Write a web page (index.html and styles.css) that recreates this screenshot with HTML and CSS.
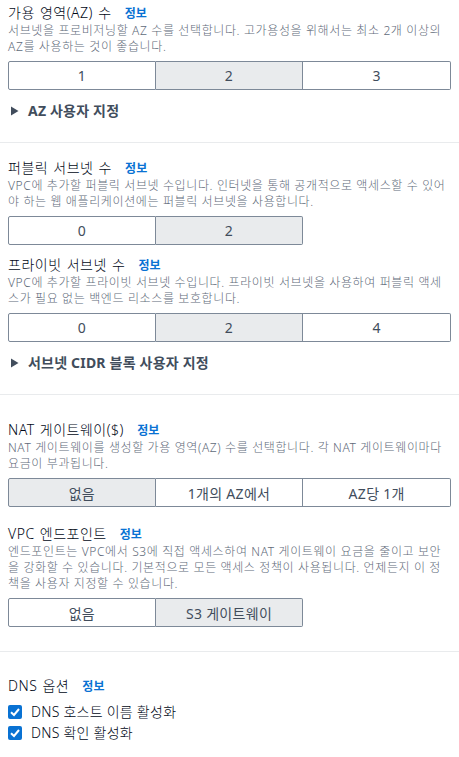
FILE: index.html
```html
<!DOCTYPE html>
<html lang="ko">

<head>
    <meta charset="UTF-8">
    <title>VPC 설정</title>
    <link rel="stylesheet" href="styles.css">
</head>

<body>
    <div class="section first">
        <div class="field">
            <div class="label">가용 영역(AZ) 수 <a class="info">정보</a></div>
            <div class="desc">서브넷을 프로비저닝할 AZ 수를 선택합니다. 고가용성을 위해서는 최소 2개 이상의 AZ를 사용하는 것이 좋습니다.</div>
            <div class="segment">
                <button>1</button>
                <button class="on">2</button>
                <button>3</button>
            </div>
        </div>
        <div class="expander">
            <svg width="10" height="10" viewBox="0 0 10 10"><path d="M1 0.5 L8.5 5 L1 9.5 Z" fill="#414d5c" /></svg>
            <span>AZ 사용자 지정</span>
        </div>
    </div>

    <div class="section second">
        <div class="field">
            <div class="label">퍼블릭 서브넷 수 <a class="info">정보</a></div>
            <div class="desc">VPC에 추가할 퍼블릭 서브넷 수입니다. 인터넷을 통해 공개적으로 액세스할 수 있어야 하는 웹 애플리케이션에는 퍼블릭 서브넷을 사용합니다.</div>
            <div class="segment">
                <button>0</button>
                <button class="on">2</button>
            </div>
        </div>
        <div class="field next">
            <div class="label">프라이빗 서브넷 수 <a class="info">정보</a></div>
            <div class="desc">VPC에 추가할 프라이빗 서브넷 수입니다. 프라이빗 서브넷을 사용하여 퍼블릭 액세스가 필요 없는 백엔드 리소스를 보호합니다.</div>
            <div class="segment">
                <button>0</button>
                <button class="on">2</button>
                <button>4</button>
            </div>
        </div>
        <div class="expander">
            <svg width="10" height="10" viewBox="0 0 10 10"><path d="M1 0.5 L8.5 5 L1 9.5 Z" fill="#414d5c" /></svg>
            <span>서브넷 CIDR 블록 사용자 지정</span>
        </div>
    </div>

    <div class="section third">
        <div class="field">
            <div class="label">NAT 게이트웨이($) <a class="info">정보</a></div>
            <div class="desc">NAT 게이트웨이를 생성할 가용 영역(AZ) 수를 선택합니다. 각 NAT 게이트웨이마다 요금이 부과됩니다.</div>
            <div class="segment">
                <button class="on">없음</button>
                <button>1개의 AZ에서</button>
                <button>AZ당 1개</button>
            </div>
        </div>
        <div class="field next wide">
            <div class="label">VPC 엔드포인트 <a class="info">정보</a></div>
            <div class="desc">엔드포인트는 VPC에서 S3에 직접 액세스하여 NAT 게이트웨이 요금을 줄이고 보안을 강화할 수 있습니다. 기본적으로 모든 액세스 정책이 사용됩니다. 언제든지 이 정책을 사용자 지정할 수 있습니다.</div>
            <div class="segment">
                <button>없음</button>
                <button class="on">S3 게이트웨이</button>
            </div>
        </div>
    </div>

    <div class="section last">
        <div class="label">DNS 옵션 <a class="info">정보</a></div>
        <div class="checks">
            <label class="check">
                <span class="box"><svg width="14" height="14" viewBox="0 0 14 14"><path d="M3 7.2 L6 10 L11 4" fill="none" stroke="#fff" stroke-width="2" /></svg></span>
                DNS 호스트 이름 활성화
            </label>
            <label class="check">
                <span class="box"><svg width="14" height="14" viewBox="0 0 14 14"><path d="M3 7.2 L6 10 L11 4" fill="none" stroke="#fff" stroke-width="2" /></svg></span>
                DNS 확인 활성화
            </label>
        </div>
    </div>
</body>

</html>
```

FILE: styles.css
```css
body {
    margin: 0;
    background: #fff;
    font-family: "Noto Sans", "Noto Sans CJK KR", sans-serif;
    font-weight: 300;
    color: #000716;
}

.section {
    padding: 0 8px;
    border-bottom: 1px solid #e9ebed;
}

.section.first {
    padding-top: 4px;
    padding-bottom: 21px;
}

.section.second {
    padding-top: 16px;
    padding-bottom: 21px;
}

.section.third {
    padding-top: 26px;
    padding-bottom: 24px;
}

.section.last {
    border-bottom: none;
    padding-top: 25px;
}

.label {
    font-size: 14px;
    line-height: 18px;
    letter-spacing: 0.5px;
    word-spacing: 1px;
}

.info {
    color: #0972d3;
    font-weight: bold;
    font-size: 12px;
    letter-spacing: 0;
    margin-left: 8px;
}

.desc {
    font-size: 12px;
    line-height: 16px;
    letter-spacing: 0.62px;
    color: #5f6b7a;
    margin-bottom: 6px;
}

.field.next {
    margin-top: 11px;
}

.field.next.wide {
    margin-top: 18px;
}

.segment {
    display: grid;
    grid-template-columns: repeat(3, 1fr);
}

.segment button {
    height: 29px;
    font-family: inherit;
    font-weight: 400;
    font-size: 14px;
    letter-spacing: 0.3px;
    color: #414d5c;
    background: #fff;
    border: 1px solid #7d8998;
    border-left: none;
    padding: 0;
}

.segment button:first-child {
    border-left: 1px solid #7d8998;
    border-radius: 2px 0 0 2px;
}

.segment button:last-child {
    border-radius: 0 2px 2px 0;
}

.segment button.on {
    background: #e9ebed;
}

.expander {
    margin-top: 11px;
    display: flex;
    align-items: center;
    gap: 8px;
    padding-left: 2px;
    font-size: 14px;
    line-height: 20px;
    font-weight: bold;
    letter-spacing: 0.2px;
    color: #414d5c;
}

.checks {
    margin-top: 5px;
}

.check {
    display: flex;
    align-items: center;
    gap: 9px;
    font-size: 14px;
    line-height: 21px;
    letter-spacing: 0.25px;
}

.box {
    width: 14px;
    height: 14px;
    background: #0972d3;
    border-radius: 2px;
    display: flex;
}
```
